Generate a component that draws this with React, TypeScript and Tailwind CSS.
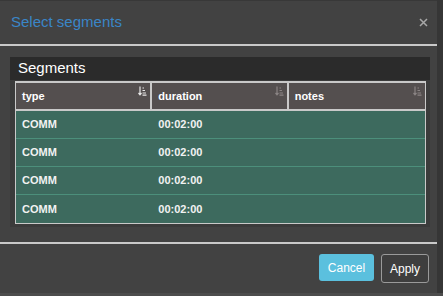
import React from "react";

const SortIcon = ({ active }: { active?: boolean }) => (
  <svg
    width="9"
    height="10"
    viewBox="0 0 9 10"
    className={active ? "text-[#e8e8e8]" : "text-[#8a8484]"}
    fill="none"
    stroke="currentColor"
    strokeWidth="1.2"
  >
    <path d="M2 0.5v8M0.5 7l1.5 1.8L3.5 7" />
    <path d="M4.5 2h1.5M4.5 4.5h2.5M4.5 7h3.5M4.5 9.2h4" />
  </svg>
);

const rows = [1, 2, 3, 4];

const App = () => {
  return (
    <div className="w-[443px] h-[296px] bg-[#363636] flex flex-col font-['Liberation_Sans',Arial,sans-serif]">
      <div className="flex flex-1">
        <div className="w-[437px] bg-[#424242] border-t border-[#383838] flex flex-col">
          <div className="h-[43px] flex items-center justify-between pl-[11px] pr-[9px]">
            <span className="text-[15px] text-[#3a86c8]">Select segments</span>
            <svg width="9" height="9" viewBox="0 0 9 9" className="text-[#a8a8a8]" stroke="currentColor" strokeWidth="1.5">
              <path d="M1 1l7 7M8 1L1 8" />
            </svg>
          </div>
          <div className="h-[2px] bg-[#c9c9c9]" />

          <div className="pl-[10px] pt-[11px]">
            <div className="w-[420px] bg-[#3b3b3b]">
              <div className="h-[23px] bg-[#2b2b2b] flex items-center pl-[8px] text-[15px] text-white">
                Segments
              </div>
              <div className="pl-[5px] pr-[4px] pt-[1px] pb-[3px]">
                <div className="border border-[#c9c9c9] border-t-2">
                  <div className="grid grid-cols-3 h-[28px] bg-[#544f4f] border-b-2 border-[#c9c9c9]">
                    <div className="relative flex items-center pl-[6px] text-[11px] font-bold text-white border-r-2 border-[#c9c9c9]">
                      type
                      <span className="absolute right-[3px] top-[3px]"><SortIcon active /></span>
                    </div>
                    <div className="relative flex items-center pl-[6px] text-[11px] font-bold text-white border-r-2 border-[#c9c9c9]">
                      duration
                      <span className="absolute right-[3px] top-[3px]"><SortIcon /></span>
                    </div>
                    <div className="relative flex items-center pl-[6px] text-[11px] font-bold text-white">
                      notes
                      <span className="absolute right-[3px] top-[3px]"><SortIcon /></span>
                    </div>
                  </div>
                  {rows.map((r, i) => (
                    <div
                      key={r}
                      className={
                        "grid grid-cols-3 h-[28px] bg-[#3d6a5e] text-[11px] font-bold text-[#f2f2f2] " +
                        (i < rows.length - 1 ? "border-b border-[#4c8f7b]" : "")
                      }
                    >
                      <div className="flex items-center pl-[6px]">COMM</div>
                      <div className="flex items-center pl-[6px]">00:02:00</div>
                      <div />
                    </div>
                  ))}
                </div>
              </div>
            </div>
          </div>

          <div className="mt-[15px] h-[2px] bg-[#c9c9c9]" />
          <div className="flex justify-end gap-[7px] pr-[8px] pt-[10px]">
            <button className="w-[55px] h-[27px] rounded-[3px] bg-[#5bc0de] text-white text-[12px]">
              Cancel
            </button>
            <button className="w-[48px] h-[29px] rounded-[3px] border border-[#9a9a9a] bg-[#3e3e3e] text-white text-[12px]">
              Apply
            </button>
          </div>
        </div>
      </div>
      <div className="h-[3px] bg-[#4c4c4c]" />
    </div>
  );
};

export default App;
